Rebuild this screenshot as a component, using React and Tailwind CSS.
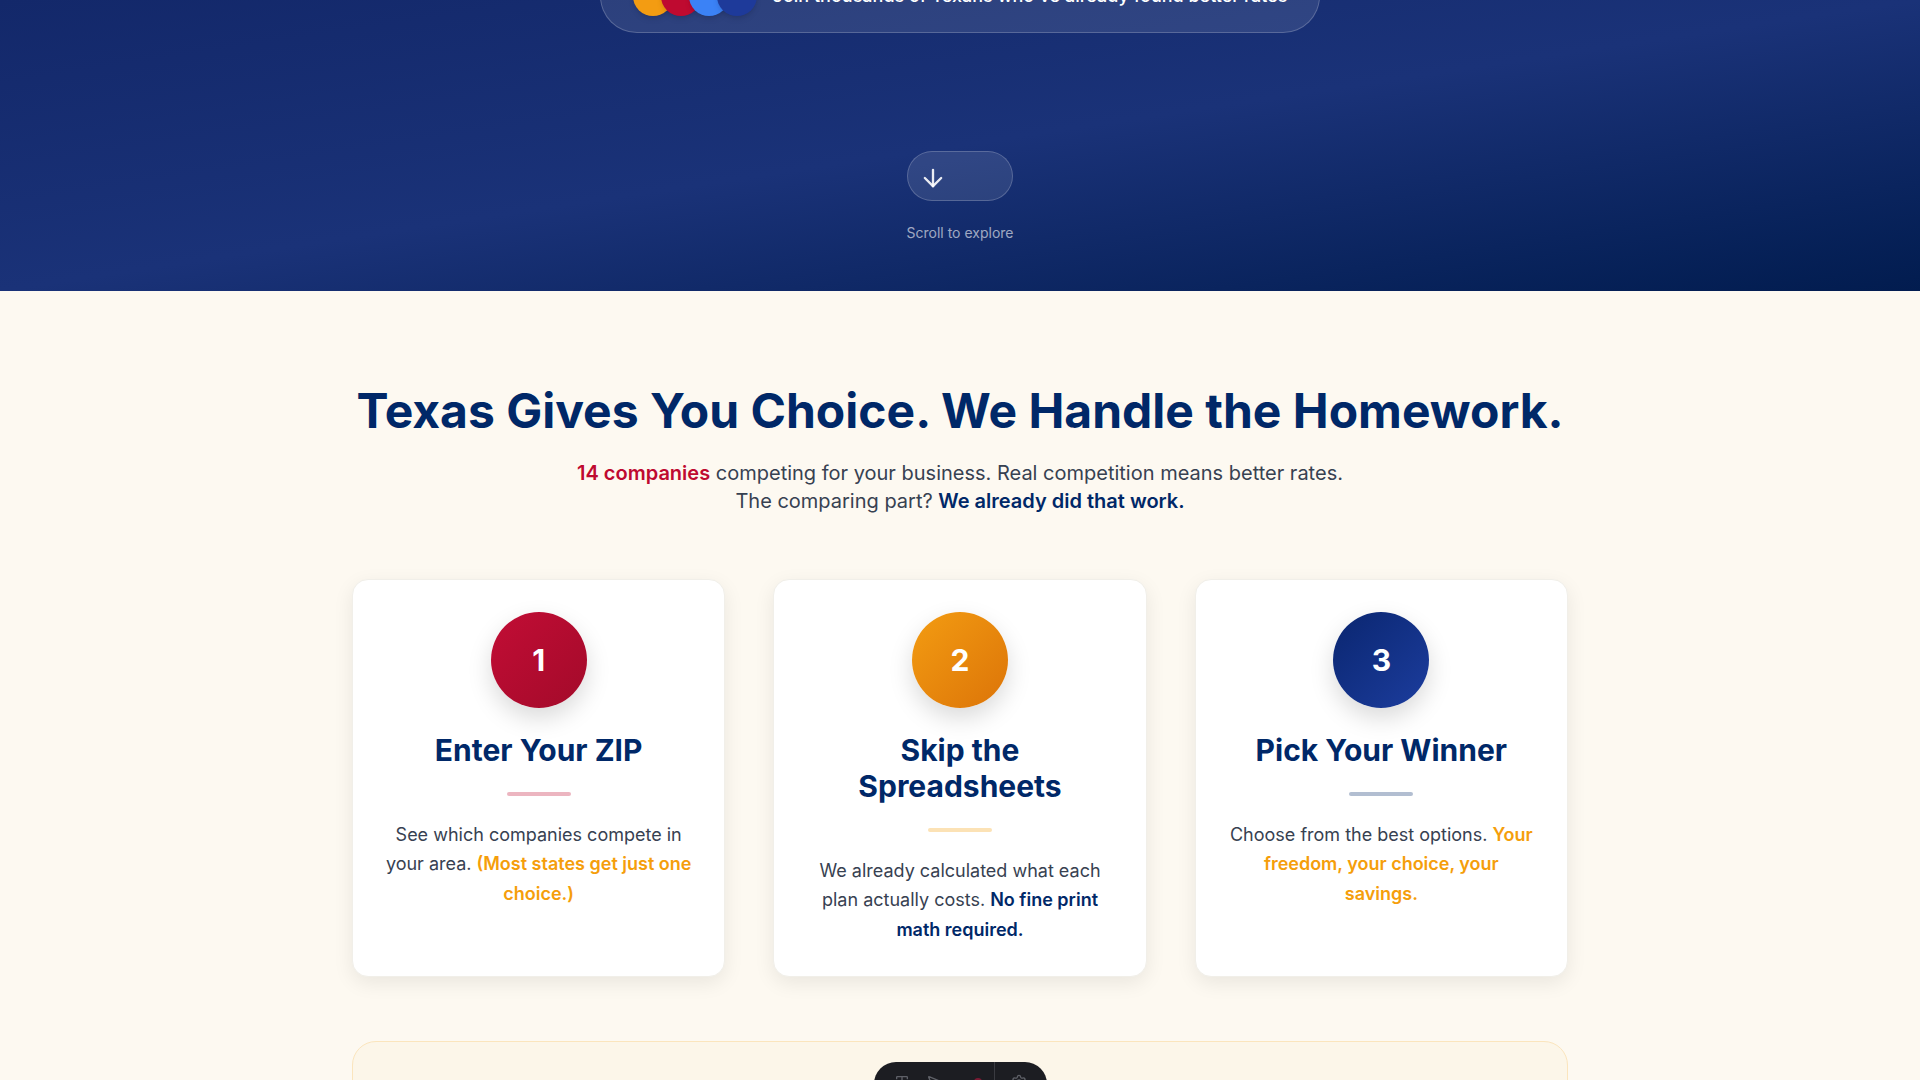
import { ArrowDown, Type, MousePointer2, Settings } from 'lucide-react'

const steps = [
  {
    n: '1',
    circle: 'bg-gradient-to-br from-[#c20d35] to-[#a30a2a]',
    bar: 'bg-[#bf0a30]/30',
    title: 'Enter Your ZIP',
    body: (
      <>
        See which companies compete in your area.{' '}
        <span className="font-semibold text-[#f59e0b]">(Most states get just one choice.)</span>
      </>
    ),
  },
  {
    n: '2',
    circle: 'bg-gradient-to-br from-[#f39c12] to-[#dc7408]',
    bar: 'bg-[#f59e0b]/30',
    title: 'Skip the Spreadsheets',
    body: (
      <>
        We already calculated what each plan actually costs.{' '}
        <span className="font-semibold text-[#002868]">No fine print math required.</span>
      </>
    ),
  },
  {
    n: '3',
    circle: 'bg-gradient-to-br from-[#0a2670] to-[#1c3d9e]',
    bar: 'bg-[#002868]/30',
    title: 'Pick Your Winner',
    body: (
      <>
        Choose from the best options.{' '}
        <span className="font-semibold text-[#f59e0b]">Your freedom, your choice, your savings.</span>
      </>
    ),
  },
]

function StepCard({ step }) {
  return (
    <div className="bg-white rounded-2xl p-8 flex flex-col items-center text-center shadow-[0_6px_20px_rgba(0,0,0,0.08)] border border-[#f1efe9]">
      <div className={`w-24 h-24 rounded-full flex items-center justify-center text-white text-3xl font-bold shadow-[0_10px_24px_rgba(0,0,0,0.15)] ${step.circle}`}>
        {step.n}
      </div>
      <h3 className="mt-6 text-3xl font-bold text-[#002868] leading-9 px-4">{step.title}</h3>
      <div className={`mt-6 w-16 h-1 rounded-full ${step.bar}`} />
      <p className="mt-6 text-lg leading-relaxed text-[#374151]">{step.body}</p>
    </div>
  )
}

export default function App() {
  return (
    <div className="min-h-screen bg-[#fdf9f1] font-['Inter',sans-serif]">
      {/* hero tail */}
      <section className="bg-gradient-to-br from-[#13286a] via-[#1a3278] to-[#021c4f] flex flex-col items-center pb-[48px] overflow-hidden">
        <div className="-mt-[41px] flex items-center gap-4 px-8 py-4 rounded-[40px] bg-white/10 border border-white/20">
          <div className="flex -space-x-3">
            <div className="w-10 h-10 rounded-full bg-[#f39c12] shadow-md" />
            <div className="w-10 h-10 rounded-full bg-[#bf0a30] shadow-md" />
            <div className="w-10 h-10 rounded-full bg-[#3b82f6] shadow-md" />
            <div className="w-10 h-10 rounded-full bg-[#1e3a9a] shadow-md" />
          </div>
          <span className="text-white text-lg font-medium">
            Join thousands of Texans who've already found better rates
          </span>
        </div>

        <div className="mt-[118px] flex flex-col items-center">
          <button className="w-[106px] h-[50px] rounded-full bg-white/10 border border-white/20 flex items-center pl-[11px]">
            <ArrowDown size={28} strokeWidth={2} className="text-white/90 mt-1" />
          </button>
          <span className="mt-[22px] text-sm text-white/60">Scroll to explore</span>
        </div>
      </section>

      {/* how it works */}
      <section className="pt-24 pb-16">
        <div className="max-w-7xl mx-auto px-8">
          <h2 className="text-5xl leading-[48px] font-bold text-[#002868] text-center">
            Texas Gives You Choice. We Handle the Homework.
          </h2>
          <p className="mt-6 text-xl leading-7 text-[#374151] text-center">
            <span className="font-semibold text-[#bf0a30]">14 companies</span> competing for your business. Real competition means better rates.
            <br />
            The comparing part? <span className="font-semibold text-[#002868]">We already did that work.</span>
          </p>

          <div className="mt-16 grid grid-cols-3 gap-12">
            {steps.map((s) => (
              <StepCard key={s.n} step={s} />
            ))}
          </div>

          <div className="mt-16 rounded-3xl border border-[#fbe5bd] bg-[#fcf6e9] pt-5 pb-10 flex justify-center">
            <div className="w-[173px] h-12 rounded-t-[22px] rounded-b-xl bg-[#1c1d22] flex items-start pt-3 px-5 gap-4 text-[#5f6168]">
              <Type size={16} />
              <MousePointer2 size={16} />
              <div className="relative mt-2">
                <div className="w-5 h-[2px] bg-[#5f6168]" />
                <div className="absolute -top-1 -right-1 w-2 h-2 rounded-full bg-[#7a1a33]" />
              </div>
              <div className="w-px h-9 -mt-3 bg-[#3a3b41]" />
              <Settings size={16} />
            </div>
          </div>
        </div>
      </section>
    </div>
  )
}
